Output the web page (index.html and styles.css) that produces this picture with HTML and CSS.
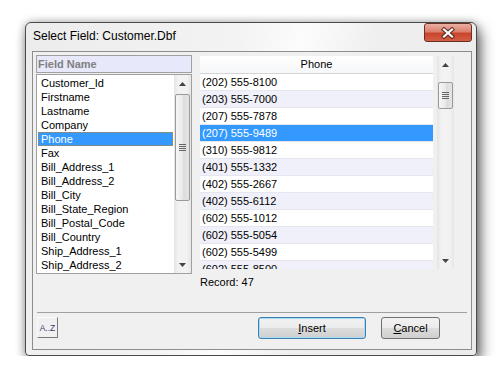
FILE: index.html
```html
<!DOCTYPE html>
<html lang="en">
<head>
    <meta charset="UTF-8">
    <title>Select Field</title>
    <link rel="stylesheet" href="styles.css">
</head>
<body>
    <div class="window">
        <div class="titlebar">
            <span class="title">Select Field: Customer.Dbf</span>
            <button class="close">
                <svg width="16" height="12" viewBox="0 0 16 12">
                    <g stroke-linecap="square">
                        <line x1="4" y1="2.5" x2="12" y2="9.5" stroke="#5a2a22" stroke-width="4.2"/>
                        <line x1="12" y1="2.5" x2="4" y2="9.5" stroke="#5a2a22" stroke-width="4.2"/>
                        <line x1="4" y1="2.5" x2="12" y2="9.5" stroke="#fff" stroke-width="2.2"/>
                        <line x1="12" y1="2.5" x2="4" y2="9.5" stroke="#fff" stroke-width="2.2"/>
                    </g>
                </svg>
            </button>
        </div>

        <div class="client">
            <div class="main">
                <!-- lista de campos -->
                <div class="fields">
                    <div class="field-head">Field Name</div>
                    <div class="listbox">
                        <ul class="items">
                            <li>Customer_Id</li>
                            <li>Firstname</li>
                            <li>Lastname</li>
                            <li>Company</li>
                            <li class="sel">Phone</li>
                            <li>Fax</li>
                            <li>Bill_Address_1</li>
                            <li>Bill_Address_2</li>
                            <li>Bill_City</li>
                            <li>Bill_State_Region</li>
                            <li>Bill_Postal_Code</li>
                            <li>Bill_Country</li>
                            <li>Ship_Address_1</li>
                            <li>Ship_Address_2</li>
                        </ul>
                        <div class="vscroll">
                            <span class="arrow"><svg width="7" height="4"><polygon points="0,4 3.5,0 7,4" fill="#444"/></svg></span>
                            <span class="thumb thumb-long">
                                <svg width="7" height="8"><g stroke="#666"><line x1="0" y1="0.5" x2="7" y2="0.5"/><line x1="0" y1="2.5" x2="7" y2="2.5"/><line x1="0" y1="4.5" x2="7" y2="4.5"/><line x1="0" y1="6.5" x2="7" y2="6.5"/></g></svg>
                            </span>
                            <span class="track"></span>
                            <span class="arrow"><svg width="7" height="4"><polygon points="0,0 7,0 3.5,4" fill="#444"/></svg></span>
                        </div>
                    </div>
                </div>

                <!-- valores del campo -->
                <div class="data">
                    <div class="grid-wrap">
                        <div class="grid">
                            <div class="grid-head">Phone</div>
                            <div class="row">(202) 555-8100</div>
                            <div class="row alt">(203) 555-7000</div>
                            <div class="row">(207) 555-7878</div>
                            <div class="row sel">(207) 555-9489</div>
                            <div class="row">(310) 555-9812</div>
                            <div class="row alt">(401) 555-1332</div>
                            <div class="row">(402) 555-2667</div>
                            <div class="row alt">(402) 555-6112</div>
                            <div class="row">(602) 555-1012</div>
                            <div class="row alt">(602) 555-5054</div>
                            <div class="row">(602) 555-5499</div>
                            <div class="row alt">(602) 555-8500</div>
                        </div>
                        <div class="vscroll gscroll">
                            <span class="arrow"><svg width="7" height="4"><polygon points="0,4 3.5,0 7,4" fill="#444"/></svg></span>
                            <span class="thumb thumb-short">
                                <svg width="7" height="8"><g stroke="#666"><line x1="0" y1="0.5" x2="7" y2="0.5"/><line x1="0" y1="2.5" x2="7" y2="2.5"/><line x1="0" y1="4.5" x2="7" y2="4.5"/><line x1="0" y1="6.5" x2="7" y2="6.5"/></g></svg>
                            </span>
                            <span class="track"></span>
                            <span class="arrow"><svg width="7" height="4"><polygon points="0,0 7,0 3.5,4" fill="#444"/></svg></span>
                        </div>
                    </div>
                    <div class="record">Record: 47</div>
                </div>
            </div>

            <div class="footer">
                <button class="sort">A..Z</button>
                <button class="btn btn-insert"><u>I</u>nsert</button>
                <button class="btn btn-cancel"><u>C</u>ancel</button>
            </div>
        </div>
    </div>
</body>
</html>
```

FILE: styles.css
```css
/* General */
body {
    margin: 0;
    background: #fff;
    font-family: "Liberation Sans", Arial, sans-serif;
    font-size: 11px;
    color: #000;
}

/* Ventana */
.window {
    box-sizing: border-box;
    width: 452px;
    height: 334px;
    margin: 22px 0 0 25px;
    border: 1px solid #4a4a4a;
    border-radius: 6px 6px 4px 4px;
    background: linear-gradient(105deg, #ececec 0%, #f3f3f3 40%, #fcfcfc 52%, #efefef 66%, #ebebeb 100%);
    box-shadow: 4px 7px 14px rgba(0, 0, 0, 0.55), 0 0 9px rgba(0, 0, 0, 0.28);
    display: flex;
    flex-direction: column;
}

.titlebar {
    height: 28px;
    display: flex;
    justify-content: space-between;
    align-items: flex-start;
    padding: 0 4px 0 7px;
}
.title {
    font-size: 12px;
    line-height: 16px;
    margin-top: 5px;
}
.close {
    box-sizing: border-box;
    width: 48px;
    height: 19px;
    padding: 0;
    border: 1px solid #6b2e25;
    border-radius: 3px;
    background: linear-gradient(#eab0a3 0%, #dc806d 45%, #c9452e 55%, #d35f43 100%);
    display: flex;
    align-items: center;
    justify-content: center;
}

/* Area cliente */
.client {
    box-sizing: border-box;
    width: 440px;
    height: 299px;
    margin: 0 4px 5px 6px;
    border: 1px solid #8d8d8d;
    background: #f0f0f0;
    padding: 3px 4px 10px 3px;
    display: flex;
    flex-direction: column;
}
.main {
    display: flex;
    align-items: flex-start;
}

/* Lista de campos */
.fields {
    width: 156px;
}
.field-head {
    box-sizing: border-box;
    height: 18px;
    border: 1px solid #a0a0a0;
    background: #e8e8fb;
    color: #808080;
    font-weight: bold;
    line-height: 16px;
    padding-left: 1px;
}
.listbox {
    box-sizing: border-box;
    height: 200px;
    margin-top: 1px;
    border: 1px solid #a0a0a0;
    background: #fff;
    display: flex;
}
.items {
    list-style: none;
    margin: 0;
    padding: 1px;
    flex: 1;
    overflow: hidden;
}
.items li {
    height: 14px;
    line-height: 14px;
    padding-left: 3px;
    white-space: nowrap;
}
.items li.sel {
    background: #3399ff;
    color: #fff;
    outline: 1px dotted #c9851c;
    outline-offset: -1px;
}

/* Barras de desplazamiento */
.vscroll {
    width: 17px;
    display: flex;
    flex-direction: column;
    background: linear-gradient(to right, #e4e4e4, #f2f2f2 25%, #f2f2f2 75%, #e6e6e6);
}
.arrow {
    height: 17px;
    flex: none;
    display: flex;
    align-items: center;
    justify-content: center;
}
.thumb {
    box-sizing: border-box;
    flex: none;
    margin: 2px 1px 0;
    border: 1px solid #9a9a9a;
    border-radius: 2px;
    background: linear-gradient(to right, #f6f6f6, #e9e9e9 50%, #dcdcdc 51%, #e4e4e4);
    display: flex;
    align-items: center;
    justify-content: center;
}
.thumb-long {
    height: 107px;
}
.thumb-short {
    height: 27px;
    margin-top: 9px;
}
.track {
    flex: 1;
}

/* Rejilla de valores */
.data {
    margin-left: 8px;
    padding-top: 1px;
}
.grid-wrap {
    display: flex;
    height: 213px;
}
.grid {
    width: 233px;
    background: #fff;
    overflow: hidden;
}
.gscroll {
    margin-left: 4px;
}
.grid-head {
    box-sizing: border-box;
    height: 18px;
    border-bottom: 1px solid #d5d5d5;
    background: linear-gradient(#fff, #f6f7f9);
    text-align: center;
    line-height: 17px;
}
.row {
    box-sizing: border-box;
    height: 17px;
    line-height: 16px;
    padding-left: 2px;
    border-bottom: 1px solid #e6e6ee;
    white-space: nowrap;
}
.row.alt {
    background: #f0f0fa;
}
.row.sel {
    background: #3399ff;
    color: #fff;
}
.record {
    margin-top: 6px;
    line-height: 14px;
}

/* Botones inferiores */
.footer {
    margin: auto 0 0 1px;
    border-top: 1px solid #a0a0a0;
    padding: 4px 27px 0 0;
    display: flex;
    align-items: flex-start;
}
.sort {
    box-sizing: border-box;
    width: 21px;
    height: 21px;
    padding: 0;
    border: 1px solid;
    border-color: #fafafa #7a7a7a #7a7a7a #fafafa;
    background: #f0f0f0;
    color: #3a3a78;
    font-family: "Liberation Sans", Arial, sans-serif;
    font-size: 8.5px;
}
.btn {
    box-sizing: border-box;
    height: 22px;
    padding: 0;
    border: 1px solid #707070;
    border-radius: 3px;
    background: linear-gradient(#f2f2f2 0%, #ebebeb 50%, #dddddd 51%, #cfcfcf 100%);
    font-family: "Liberation Sans", Arial, sans-serif;
    font-size: 11px;
    color: #000;
}
.btn-insert {
    width: 108px;
    margin-left: auto;
    border-color: #3c7fb1;
    box-shadow: inset 0 0 0 1px #a6dcf3;
}
.btn-cancel {
    width: 59px;
    margin-left: 15px;
}
```
